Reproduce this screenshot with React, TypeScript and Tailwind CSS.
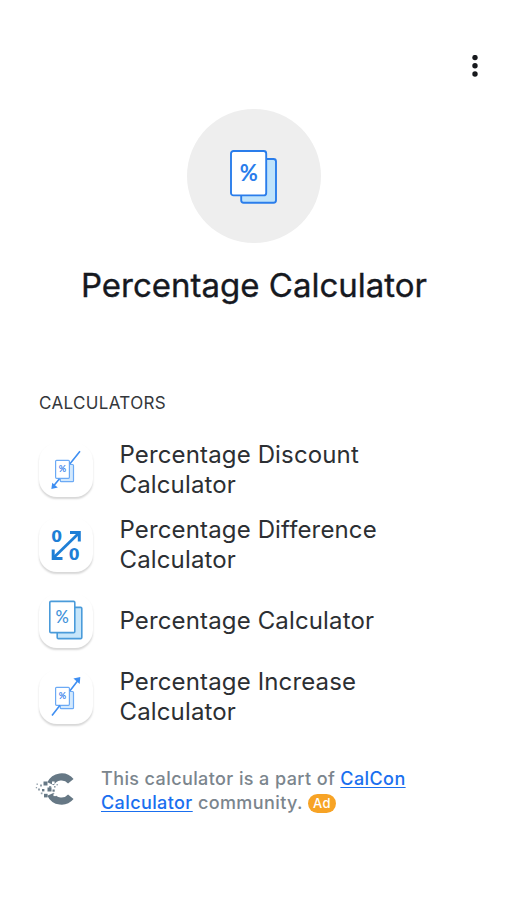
type IconProps = { className?: string };

function PagesIcon({ className }: IconProps) {
  return (
    <svg viewBox="0 0 48 54" fill="none" aria-hidden="true" className={className}>
      <rect x="11.2" y="9" width="34.8" height="43.8" rx="2.5" fill="#BFE3FB" stroke="#2A7DEB" strokeWidth="1.9" />
      <rect x="1" y="1" width="35.2" height="44.4" rx="2.5" fill="#fff" stroke="#2A7DEB" strokeWidth="1.9" />
      <text x="18.7" y="30.8" textAnchor="middle" fill="#2A7DEB" className="font-['Lato',sans-serif] text-[22px] font-bold">
        %
      </text>
    </svg>
  );
}

function ThinPagesIcon() {
  return (
    <svg viewBox="0 0 54 54" fill="none" aria-hidden="true" className="h-full w-full">
      <rect x="18.2" y="13.4" width="24.6" height="31.2" rx="1.2" fill="#C7E6FA" stroke="#4A9BDA" strokeWidth="1.6" />
      <rect x="10.8" y="7.4" width="25" height="31.2" rx="1.2" fill="#fff" stroke="#4A9BDA" strokeWidth="1.6" />
      <text x="23.2" y="29.2" textAnchor="middle" fill="#3F92DA" className="font-['Lato',sans-serif] text-[16.5px] font-medium">
        %
      </text>
    </svg>
  );
}

function TrendIcon({ down }: { down?: boolean }) {
  return (
    <svg viewBox="0 0 54 54" fill="none" aria-hidden="true" className="h-full w-full">
      <rect x="21.3" y="21.5" width="13.2" height="17.2" rx="1" fill="#D3E9FD" stroke="#6CAAF5" strokeWidth="1.2" />
      <rect x="16.6" y="17.3" width="13.8" height="18" rx="1" fill="#fff" stroke="#6CAAF5" strokeWidth="1.2" />
      <text x="23.5" y="29.3" textAnchor="middle" fill="#3C86EC" className="font-['Lato',sans-serif] text-[9px] font-bold">
        %
      </text>
      {down ? (
        <>
          <path d="M41 8.3 31 20.8M20.5 35.8 14.5 43" stroke="#3F8FF2" strokeWidth="1.6" />
          <path d="M12.4 46 13.2 39.8 18.8 44.4Z" fill="#3F8FF2" />
        </>
      ) : (
        <>
          <path d="M13 45.5 21 35.3M31 20.8 38.5 11" stroke="#3F8FF2" strokeWidth="1.6" />
          <path d="M41.3 7 40.7 14 34.4 8.6Z" fill="#3F8FF2" />
        </>
      )}
    </svg>
  );
}

function DifferenceIcon() {
  return (
    <svg viewBox="0 0 54 54" fill="none" aria-hidden="true" className="h-full w-full">
      <path d="M14.8 39.5 40 15" stroke="#1E7FD6" strokeWidth="2.8" />
      <path d="M31 14.5H40.3V23.5M14.2 31.5V40.5H23.5" stroke="#1E7FD6" strokeWidth="3" />
      <g fill="#1E7FD6" className="font-['DejaVu_Sans',sans-serif] text-[15.5px] font-bold">
        <text x="17.6" y="24.3" textAnchor="middle">0</text>
        <text x="35.2" y="41.6" textAnchor="middle">0</text>
      </g>
    </svg>
  );
}

function CommunityLogo() {
  return (
    <svg viewBox="0 0 40 34" fill="#667885" aria-hidden="true" className="mt-[5px] h-[34px] w-10">
      <path
        d="M15.6 11.8A12.1 12.1 0 0 1 35.8 9.2M35.8 24.8A12.1 12.1 0 0 1 15.6 22.2"
        fill="none"
        stroke="#667885"
        strokeWidth="7.2"
      />
      <rect x="17" y="9.5" width="2.6" height="2.6" fill="#fff" />
      <rect x="18.5" y="21.5" width="2.6" height="2.6" fill="#fff" />
      <rect x="14" y="14" width="2.2" height="2.2" fill="#93A0AA" />
      <rect x="8.5" y="9.5" width="4" height="4" />
      <rect x="5" y="12.5" width="2" height="2" fill="#93A0AA" />
      <rect x="12.5" y="15.5" width="4" height="4" />
      <rect x="19" y="14" width="1.6" height="1.6" fill="#93A0AA" />
      <rect x="21.5" y="12" width="1.4" height="1.4" fill="#93A0AA" />
      <rect x="1.5" y="11.5" width="1.4" height="1.4" fill="#93A0AA" />
      <rect x="0.8" y="15" width="1.3" height="1.3" fill="#93A0AA" />
      <rect x="3" y="16.5" width="2" height="2" fill="#93A0AA" />
      <rect x="7" y="17" width="2.4" height="2.4" />
      <rect x="5.8" y="20.5" width="1.7" height="1.7" fill="#93A0AA" />
      <rect x="9" y="21.8" width="3.6" height="3.6" />
      <rect x="17.5" y="17.5" width="2.2" height="2.2" />
    </svg>
  );
}

const calculators = [
  { name: "Percentage Discount Calculator", icon: <TrendIcon down /> },
  { name: "Percentage Difference Calculator", icon: <DifferenceIcon /> },
  { name: "Percentage Calculator", icon: <ThinPagesIcon /> },
  { name: "Percentage Increase Calculator", icon: <TrendIcon /> },
];

export default function App() {
  return (
    <div className="flex h-[900px] w-[507px] flex-col bg-white font-['Inter',sans-serif]">
      <header className="flex justify-end pt-[54px] pr-[26px]">
        <button aria-label="More options" className="flex h-6 w-3 items-center justify-center">
          <svg viewBox="0 0 6 22" fill="#17191D" className="h-[22px] w-1.5">
            <circle cx="3" cy="2.6" r="2.7" />
            <circle cx="3" cy="10.8" r="2.7" />
            <circle cx="3" cy="19" r="2.7" />
          </svg>
        </button>
      </header>

      <section className="mt-[31px] flex flex-col items-center pl-px">
        <div className="flex h-[134px] w-[134px] items-center justify-center rounded-full bg-[#EEEEEE] pt-0.5">
          <PagesIcon className="h-[54px] w-12" />
        </div>
        <h1 className="mt-[22px] text-[33px] leading-10 whitespace-nowrap text-[#16191F] [-webkit-text-stroke:0.35px_#16191F]">
          Percentage Calculator
        </h1>
      </section>

      <section className="mt-[88px] pl-[39px]">
        <h2 className="text-[17px] leading-[21px] tracking-[0.35px] text-[#34373B]">CALCULATORS</h2>
        <ul className="mt-[18px]">
          {calculators.map((calculator) => (
            <li key={calculator.name} className="flex h-[75.6px] items-center">
              <div className="h-[54px] w-[54px] shrink-0 rounded-[18px] bg-white shadow-[0_2px_2px_-0.5px_rgba(0,0,0,0.16)]">
                {calculator.icon}
              </div>
              <span className="ml-[26.5px] w-[280px] text-[24px] leading-[30px] tracking-[0.14px] text-[#2C2F33]">
                {calculator.name}
              </span>
            </li>
          ))}
        </ul>
      </section>

      <footer className="mt-[33px] flex items-start pl-[35px]">
        <CommunityLogo />
        <p className="ml-[26px] text-[18px] leading-[23.5px] font-medium tracking-[0.4px] whitespace-nowrap text-[#7B858D]">
          This calculator is a part of{" "}
          <a href="#" className="text-[#1A6FEF] underline underline-offset-2">
            CalCon
            <br />
            Calculator
          </a>{" "}
          community.{" "}
          <span className="-my-1 inline-flex h-[19px] w-7 items-center justify-center rounded-full bg-[#F7A325] align-[1px] text-[13px] leading-none text-white">
            Ad
          </span>
        </p>
      </footer>
    </div>
  );
}
